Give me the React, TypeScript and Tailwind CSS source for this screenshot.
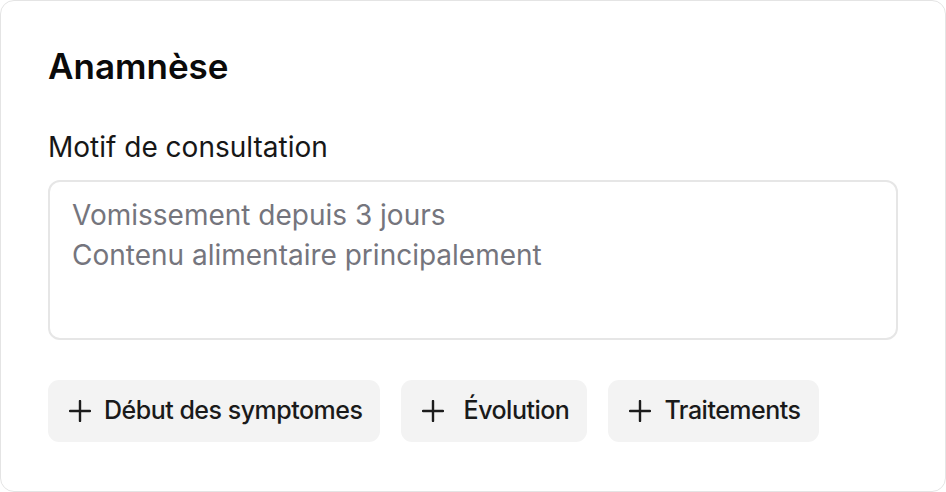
import React from 'react';

function PlusIcon() {
  return (
    <svg width="22" height="22" viewBox="0 0 22 22" fill="none" className="shrink-0">
      <path d="M11 1v20M1 11h20" stroke="#1c1c1c" strokeWidth="2.4" strokeLinecap="round" />
    </svg>
  );
}

const chips = ['Début des symptomes', ' Évolution', 'Traitements'];

export default function App() {
  return (
    <div className="w-[946px] h-[492px] bg-white font-['Inter',sans-serif]">
      <div className="h-full rounded-[14px] border border-[#e4e4e4] bg-white px-[47px] pt-[44px]">
        <h2 className="text-[35px] leading-[42px] font-semibold text-[#0a0a0a]">Anamnèse</h2>

        <label className="mt-[44px] block text-[28px] leading-[32px] text-[#171717]">Motif de consultation</label>

        <textarea
          readOnly
          defaultValue={'Vomissement depuis 3 jours\nContenu alimentaire principalement'}
          className="mt-[17px] block w-full h-[160px] resize-none rounded-[12px] border-2 border-[#e6e6e6] px-[22px] pt-[13px] text-[28px] leading-[40px] text-[#75757d] outline-none"
        />

        <div className="mt-10 flex gap-[21px]">
          {chips.map((c) => (
            <button
              key={c}
              className="flex h-[62px] items-center gap-[13px] rounded-[11px] bg-[#f3f3f3] pl-[21px] pr-[18px] text-[25px] tracking-[-0.02em] font-medium text-[#1a1a1a] whitespace-pre"
            >
              <PlusIcon />
              <span>{c}</span>
            </button>
          ))}
        </div>
      </div>
    </div>
  );
}
